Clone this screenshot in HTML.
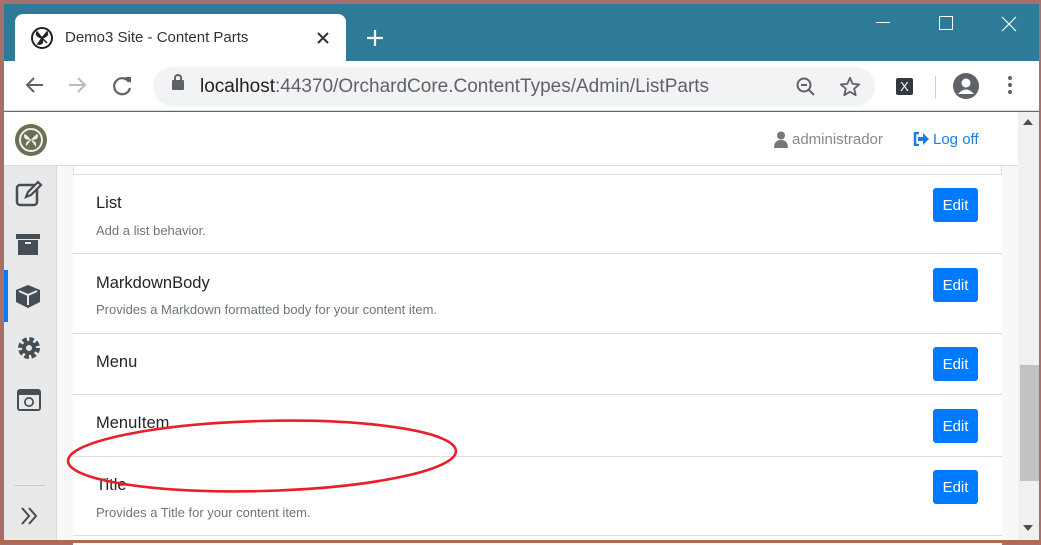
<!DOCTYPE html>
<html><head><meta charset="utf-8"><style>
*{box-sizing:border-box;margin:0;padding:0}
body{width:1041px;height:543px;overflow:hidden;background:#a56f6c;font-family:"Liberation Sans",sans-serif;position:relative}
.abs{position:absolute}
.row{position:absolute;left:73px;width:929px;border-top:1px solid #dedede;background:#fff}
.row .t{position:absolute;left:23px;font-size:16.5px;color:#212529}
.row .d{position:absolute;left:23px;font-size:13px;color:#6c757d}
.btn{position:absolute;left:860px;width:45px;height:34px;background:#007bff;border-radius:3px;color:#fff;font-size:15px;text-align:center;line-height:36px}
</style></head><body>
<div class="abs" style="left:4px;top:4px;width:1035px;height:539px;background:#2e7b99"></div>
<div class="abs" style="left:15px;top:14px;width:331px;height:48px;background:#fff;border-radius:8px 8px 0 0"></div>
<svg class="abs" style="left:30px;top:26px" width="24" height="24" viewBox="0 0 24 24"><circle cx="12" cy="12" r="10" fill="none" stroke="#222" stroke-width="2"/><path d="M12 12 L7 6 Q5 10 12 12 M12 12 L17 6 Q19 10 12 12 M12 12 L8 18 Q14 19 12 12 M12 12 L17 17" fill="#222" stroke="#222" stroke-width="1.5"/></svg>
<div class="abs" style="left:65px;top:29px;font-size:15px;color:#333">Demo3 Site - Content Parts</div>
<svg class="abs" style="left:316px;top:31px" width="14" height="14"><path d="M2 2L12 12M12 2L2 12" stroke="#333" stroke-width="2"/></svg>
<svg class="abs" style="left:366px;top:29px" width="18" height="18"><path d="M9 1V17M1 9H17" stroke="#fff" stroke-width="2.2"/></svg>
<div class="abs" style="left:876px;top:22px;width:14px;height:1px;background:#fff"></div>
<div class="abs" style="left:939px;top:16px;width:14px;height:14px;border:1px solid #fff"></div>
<svg class="abs" style="left:1001px;top:16px" width="16" height="16"><path d="M1 1L15 15M15 1L1 15" stroke="#fff" stroke-width="1.2"/></svg>
<div class="abs" style="left:4px;top:61px;width:1035px;height:50px;background:#fff;border-bottom:1px solid #dadce0"></div>
<svg class="abs" style="left:24px;top:76px" width="20" height="18"><path d="M19 9H3M10 2L3 9L10 16" fill="none" stroke="#5f6368" stroke-width="2"/></svg>
<svg class="abs" style="left:68px;top:76px" width="20" height="18"><path d="M1 9H17M10 2L17 9L10 16" fill="none" stroke="#bbb" stroke-width="2"/></svg>
<svg class="abs" style="left:112px;top:75px" width="22" height="22"><path d="M17 7A8 8 0 1 0 18 13" fill="none" stroke="#5f6368" stroke-width="2.2"/><path d="M13 2H19V8Z" fill="#5f6368"/></svg>
<div class="abs" style="left:153px;top:67px;width:722px;height:39px;background:#f1f3f4;border-radius:20px"></div>
<div class="abs" style="left:172px;top:80px;width:12px;height:10px;background:#5f6368;border-radius:1px"></div>
<div class="abs" style="left:174px;top:74px;width:8px;height:9px;border:2px solid #5f6368;border-bottom:none;border-radius:4px 4px 0 0"></div>
<div class="abs" style="left:200px;top:76px;font-size:19px;color:#202124">localhost<span style="color:#5f6368">:44370/OrchardCore.ContentTypes/Admin/ListParts</span></div>
<svg class="abs" style="left:795px;top:76px" width="22" height="22"><circle cx="9" cy="9" r="6.5" fill="none" stroke="#5f6368" stroke-width="2"/><path d="M6 9h6M14 14l5 5" stroke="#5f6368" stroke-width="2"/></svg>
<svg class="abs" style="left:839px;top:76px" width="22" height="22" viewBox="0 0 24 24"><path d="M12 2l2.9 6.6 7.1.6-5.4 4.7 1.6 7-6.2-3.7-6.2 3.7 1.6-7L2 9.2l7.1-.6z" fill="none" stroke="#5f6368" stroke-width="2" stroke-linejoin="round"/></svg>
<div class="abs" style="left:896px;top:78px;width:17px;height:17px;background:#2f3a42;border-radius:2px;color:#fff;font-size:13px;text-align:center;line-height:17px">X</div>
<div class="abs" style="left:935px;top:76px;width:1px;height:22px;background:#ccc"></div>
<svg class="abs" style="left:953px;top:73px" width="26" height="26"><circle cx="13" cy="13" r="13" fill="#5f6368"/><circle cx="13" cy="10" r="4.5" fill="#fff"/><path d="M5 21 Q13 12 21 21" fill="#fff"/></svg>
<div class="abs" style="left:1008px;top:76px;width:4px;height:4px;background:#5f6368;border-radius:2px;box-shadow:0 7px #5f6368,0 14px #5f6368"></div>
<div class="abs" style="left:4px;top:112px;width:1014px;height:428px;background:#f8f8f8"></div>
<div class="abs" style="left:4px;top:112px;width:1014px;height:54px;background:#fff;border-bottom:1px solid #dedede"></div>
<svg class="abs" style="left:15px;top:124px" width="32" height="32"><circle cx="16" cy="16" r="16" fill="#6b7055"/><circle cx="16" cy="16" r="11" fill="none" stroke="#eee" stroke-width="2"/><path d="M16 16 Q9 7 9 12 Q9 16 16 16 Q23 7 23 12 Q23 16 16 16 Q9 25 11 22 Q10 17 16 16 Q22 25 21 22 Q22 17 16 16" fill="#eee"/></svg>
<svg class="abs" style="left:774px;top:131px" width="14" height="17"><circle cx="7" cy="4.5" r="4" fill="#777"/><path d="M0 17 Q0 9 7 9 Q14 9 14 17Z" fill="#777"/></svg>
<div class="abs" style="left:792px;top:131px;font-size:15px;color:#888">administrador</div>
<svg class="abs" style="left:913px;top:132px" width="16" height="14"><path d="M6 1H2V13H6" fill="none" stroke="#1a7ee6" stroke-width="2.5"/><path d="M5 5H10V1L16 7L10 13V9H5Z" fill="#1a7ee6"/></svg>
<div class="abs" style="left:933px;top:131px;font-size:15px;color:#1a7ee6">Log off</div>
<div class="abs" style="left:4px;top:166px;width:53px;height:374px;background:#e9e9e9;border-right:1px solid #dcdcdc"></div>
<div class="abs" style="left:4px;top:270px;width:4px;height:52px;background:#007bff"></div>
<svg class="abs" style="left:15px;top:180px" width="28" height="28"><rect x="2" y="5" width="20" height="20" rx="3" fill="none" stroke="#454d55" stroke-width="2.5"/><path d="M11 17l2-5 10-10 3 3-10 10z" fill="#e9e9e9" stroke="#454d55" stroke-width="2.2"/></svg>
<svg class="abs" style="left:16px;top:233px" width="26" height="24"><rect x="0" y="1" width="24" height="5" fill="#454d55"/><rect x="2" y="7" width="20" height="15" fill="#454d55"/><rect x="9" y="9" width="6" height="2" fill="#e9e9e9"/></svg>
<svg class="abs" style="left:16px;top:284px" width="26" height="26"><path d="M12 1 L24 6 L24 18 L12 24 L0 18 L0 6Z" fill="#454d55"/><path d="M3 7 L12 11 L21 7 M12 11 L12 21" stroke="#e9e9e9" stroke-width="2" fill="none"/></svg>
<svg class="abs" style="left:17px;top:336px" width="26" height="26" viewBox="0 0 26 26"><circle cx="12" cy="12" r="8" fill="none" stroke="#454d55" stroke-width="6" stroke-dasharray="4 2.3"/><circle cx="12" cy="12" r="7" fill="#454d55"/><circle cx="12" cy="12" r="3" fill="#e9e9e9"/></svg>
<svg class="abs" style="left:16px;top:388px" width="26" height="24"><rect x="1" y="1" width="24" height="22" rx="3" fill="#454d55"/><rect x="3" y="7" width="20" height="14" fill="#e9e9e9"/><circle cx="13" cy="14" r="5" fill="#454d55"/><circle cx="13" cy="14" r="3.3" fill="#e9e9e9"/></svg>
<div class="abs" style="left:14px;top:485px;width:31px;height:1px;background:#ccc"></div>
<svg class="abs" style="left:19px;top:506px" width="20" height="20"><path d="M3 2L10 10L3 18M10 2L17 10L10 18" fill="none" stroke="#454d55" stroke-width="2"/></svg>
<div class="abs" style="left:73px;top:166px;width:929px;height:374px;background:#fff;border-left:1px solid #dedede;border-right:1px solid #dedede"></div>
<div class="row" style="top:174px;height:80px"><div class="t" style="top:19px">List</div><div class="d" style="top:48px">Add a list behavior.</div><div class="btn" style="top:13px">Edit</div></div>
<div class="row" style="top:253px;height:81px"><div class="t" style="top:20px">MarkdownBody</div><div class="d" style="top:48px">Provides a Markdown formatted body for your content item.</div><div class="btn" style="top:14px">Edit</div></div>
<div class="row" style="top:333px;height:62px"><div class="t" style="top:19px">Menu</div><div class="btn" style="top:13px">Edit</div></div>
<div class="row" style="top:394px;height:63px"><div class="t" style="top:19px">MenuItem</div><div class="btn" style="top:14px">Edit</div></div>
<div class="row" style="top:456px;height:80px"><div class="t" style="top:19px">Title</div><div class="d" style="top:48px">Provides a Title for your content item.</div><div class="btn" style="top:13px">Edit</div></div>
<div class="row" style="top:535px;height:10px"></div>
<div class="abs" style="left:1018px;top:112px;width:21px;height:428px;background:#f0f0f0"></div>
<div class="abs" style="left:1020px;top:365px;width:19px;height:116px;background:#c1c1c1"></div>
<div class="abs" style="left:1023px;top:119px;border:5px solid transparent;border-bottom:6px solid #505050;border-top:none"></div>
<div class="abs" style="left:1023px;top:525px;border:5px solid transparent;border-top:6px solid #505050;border-bottom:none"></div>
<div class="abs" style="left:0;top:540px;width:1041px;height:3px;background:#b06a50"></div>
<svg class="abs" style="left:0;top:0" width="1041" height="543"><ellipse cx="262" cy="456" rx="194" ry="35" fill="none" stroke="#e8202a" stroke-width="2.6" transform="rotate(-1.5 262 456)"/></svg>
</body></html>
